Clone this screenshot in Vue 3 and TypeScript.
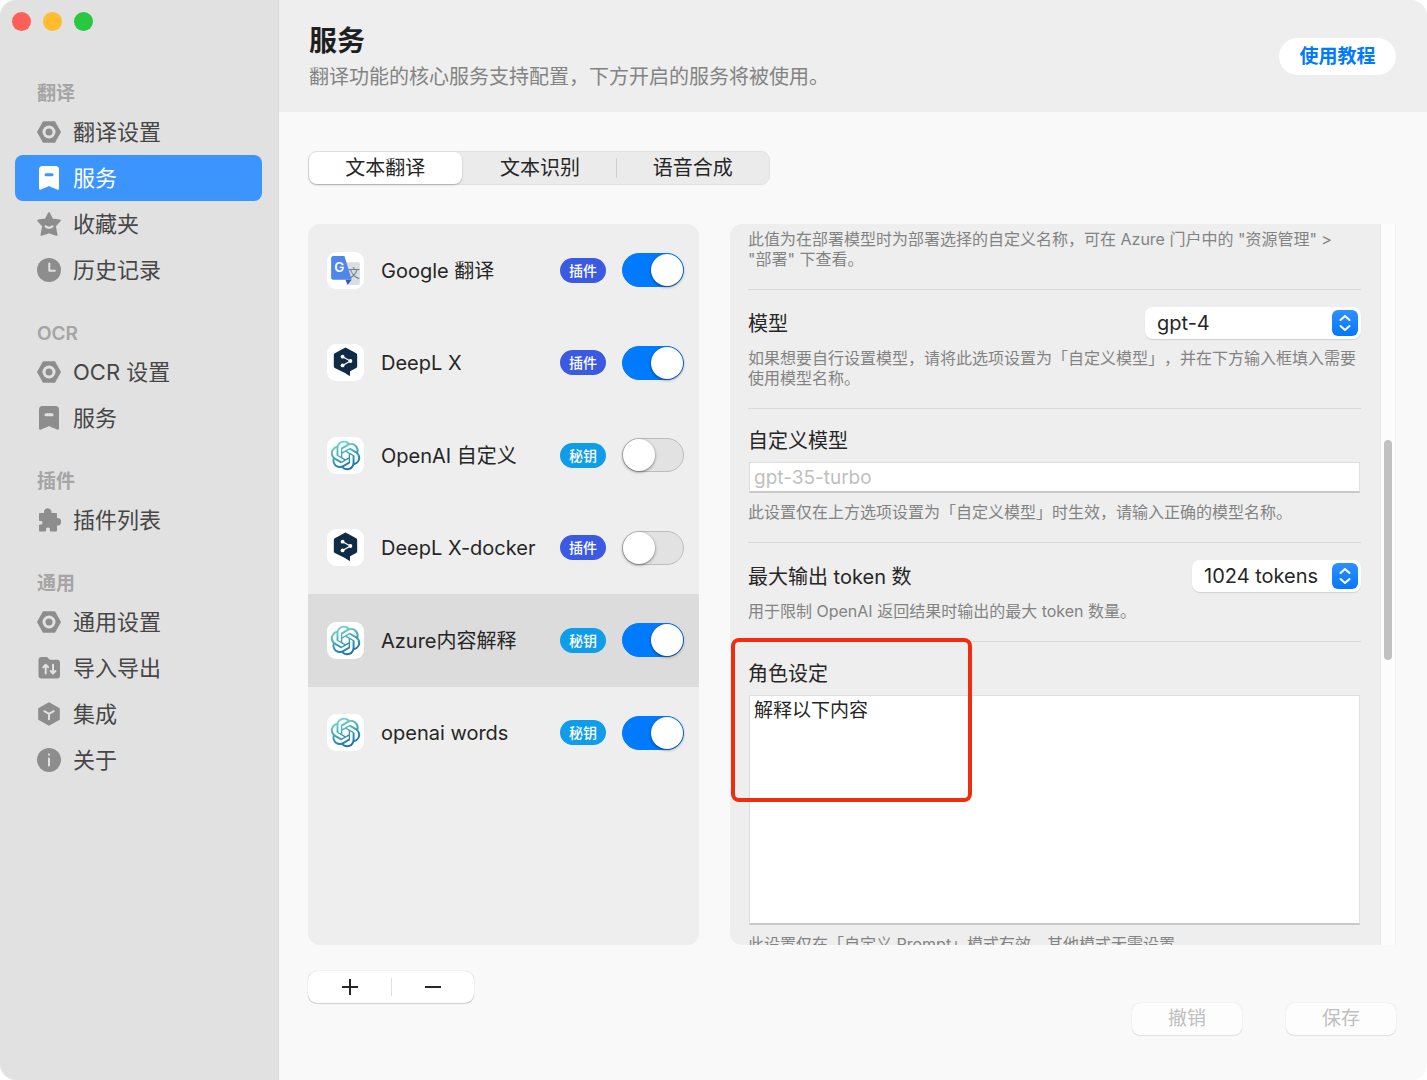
<script setup lang="ts">
import { ref } from 'vue'

type IconName = 'gear' | 'bookmark' | 'star' | 'clock' | 'puzzle' | 'folder' | 'box' | 'info'
type Logo = 'google' | 'deepl' | 'openai'

interface NavItem {
  icon: IconName
  label: string
  active?: boolean
}

interface NavGroup {
  title: string
  items: NavItem[]
}

interface Service {
  name: string
  logo: Logo
  tag: string
  enabled: boolean
}

const groups: NavGroup[] = [
  {
    title: '翻译',
    items: [
      { icon: 'gear', label: '翻译设置' },
      { icon: 'bookmark', label: '服务', active: true },
      { icon: 'star', label: '收藏夹' },
      { icon: 'clock', label: '历史记录' },
    ],
  },
  {
    title: 'OCR',
    items: [
      { icon: 'gear', label: 'OCR 设置' },
      { icon: 'bookmark', label: '服务' },
    ],
  },
  { title: '插件', items: [{ icon: 'puzzle', label: '插件列表' }] },
  {
    title: '通用',
    items: [
      { icon: 'gear', label: '通用设置' },
      { icon: 'folder', label: '导入导出' },
      { icon: 'box', label: '集成' },
      { icon: 'info', label: '关于' },
    ],
  },
]

const tabs = ['文本翻译', '文本识别', '语音合成']
const activeTab = ref(0)

const services = ref<Service[]>([
  { name: 'Google 翻译', logo: 'google', tag: '插件', enabled: true },
  { name: 'DeepL X', logo: 'deepl', tag: '插件', enabled: true },
  { name: 'OpenAI 自定义', logo: 'openai', tag: '秘钥', enabled: false },
  { name: 'DeepL X-docker', logo: 'deepl', tag: '插件', enabled: false },
  { name: 'Azure内容解释', logo: 'openai', tag: '秘钥', enabled: true },
  { name: 'openai words', logo: 'openai', tag: '秘钥', enabled: true },
])
const selected = ref(4)

const model = ref('gpt-4')
const tokens = ref('1024 tokens')
const customModel = ref('')
const role = ref('解释以下内容')
</script>

<template>
  <div class="window">
    <aside class="sidebar">
      <div class="lights">
        <button class="light red" type="button" aria-label="关闭"></button>
        <button class="light yellow" type="button" aria-label="最小化"></button>
        <button class="light green" type="button" aria-label="缩放"></button>
      </div>
      <nav>
        <section v-for="group in groups" :key="group.title" class="group">
          <h2 class="group-title">{{ group.title }}</h2>
          <a
            v-for="item in group.items"
            :key="item.label"
            href="#"
            class="nav-item"
            :class="{ active: item.active }"
          >
            <svg class="nav-icon" viewBox="0 0 24 24" aria-hidden="true">
              <template v-if="item.icon === 'gear'">
                <path class="fill join" d="M1.100 12 6.600 2.200h10.800L22.900 12l-5.500 9.800H6.600z" />
                <circle class="cut-line heavy" cx="12" cy="12" r="5" />
              </template>
              <template v-else-if="item.icon === 'bookmark'">
                <path class="fill" d="M5.500 0h13A3.500 3.500 0 0 1 22 3.500V22.400a1.300 1.300 0 0 1-2 1.100C17 22 14.500 21.500 12 20 9.500 21.500 7 22 4 23.500a1.300 1.300 0 0 1-2-1.100V3.500A3.500 3.500 0 0 1 5.500 0z" />
                <path class="cut-line heavy" d="M9 8.800h6" />
              </template>
              <template v-else-if="item.icon === 'star'">
                <path class="fill join" d="M12 1.200 15.200 7.400 22.800 8.600 17.800 14 19.500 22.800 12 20.200 4.500 22.800 6.200 14 1.200 8.600 8.800 7.400z" />
                <path class="cut-line" d="M8.500 14.400c2 1.500 5 1.500 7 0" />
              </template>
              <template v-else-if="item.icon === 'clock'">
                <circle class="fill" cx="12" cy="12" r="12" />
                <path class="cut-line" d="M12.300 5.500v7.200h5.500" />
              </template>
              <template v-else-if="item.icon === 'puzzle'">
                <path class="fill join" d="M3 6h5.300C7.300 3.400 8.400 1.300 10.700 1.300S14.100 3.400 13.200 6H19v5.300c2.500-.9 4.300.3 4.300 2.400S21.500 17 19 16.100V22.500h-5.200c.5-2.700-.8-4-2.800-4s-3.300 1.300-2.800 4H3v-5c2.300.4 3.400-.8 3.400-2.700S5.300 11.700 3 12.100z" />
              </template>
              <template v-else-if="item.icon === 'folder'">
                <path class="fill" d="M4.500 1h4.800c2.200 0 2.200 2.800 4.500 2.800H20A3 3 0 0 1 23 6.800V19.500a3 3 0 0 1-3 3H4.500a3 3 0 0 1-3-3V4a3 3 0 0 1 3-3z" />
                <path class="cut-line" d="M8.700 17.500V9M6.300 11.200 8.700 8.800l2.400 2.400M16 8.800v8.500M13.600 15l2.400 2.500 2.400-2.500" />
              </template>
              <template v-else-if="item.icon === 'box'">
                <path class="fill join" d="M12 1.300 21.800 6.800V17.200L12 22.700 2.200 17.200V6.800z" />
                <path class="cut-line" d="M7.300 9.200 12 11.900l4.700-2.700M12 12v5.300" />
              </template>
              <template v-else>
                <circle class="fill" cx="12" cy="12" r="12" />
                <path class="cut-line" d="M12 10.500v7M12 6.500v.2" />
              </template>
            </svg>
            <span>{{ item.label }}</span>
          </a>
        </section>
      </nav>
    </aside>

    <main class="main">
      <header class="header">
        <div class="heading">
          <h1 class="title">服务</h1>
          <p class="subtitle">翻译功能的核心服务支持配置，下方开启的服务将被使用。</p>
        </div>
        <button class="tutorial" type="button">使用教程</button>
      </header>

      <div class="body">
        <div class="tabs" role="tablist">
          <button
            v-for="(tab, i) in tabs"
            :key="tab"
            type="button"
            role="tab"
            class="tab"
            :class="{ current: i === activeTab, divided: i > 0 && i - 1 !== activeTab && i !== activeTab }"
            :aria-selected="i === activeTab"
            @click="activeTab = i"
          >
            {{ tab }}
          </button>
        </div>

        <div class="panels">
          <div class="services">
            <ul class="service-list">
              <li
                v-for="(service, i) in services"
                :key="service.name"
                class="service"
                :class="{ selected: i === selected }"
                @click="selected = i"
              >
                <span class="logo">
                  <svg v-if="service.logo === 'google'" viewBox="0 0 36 36" aria-hidden="true">
                    <path fill="#dcdde0" d="M17 10h13a2 2 0 0 1 2 2v18a2 2 0 0 1-2 2H21z" />
                    <text x="20" y="25" font-size="12" fill="#6f7f8c">文</text>
                    <path fill="#3a55c0" d="M18 27h6l-4 5z" />
                    <path fill="#4f86ea" d="M6 4h11l7 23H6a2 2 0 0 1-2-2V6a2 2 0 0 1 2-2z" />
                    <text x="7" y="19" font-size="13" font-weight="600" fill="#fff">G</text>
                  </svg>
                  <svg v-else-if="service.logo === 'deepl'" viewBox="-1 -1 38 38" aria-hidden="true">
                    <path fill="#0f2b46" d="M17 3q1-.6 2 0l10 5.400q1 .6 1 1.800v11.600q0 1.200-1 1.800l-6.300 3.400-.2 5-5-3.200L7 23.600q-1-.6-1-1.800V10.200Q6 9 7 8.400z" />
                    <path fill="none" stroke="#fff" stroke-width="1.200" d="m15 12 8 4.500-8 4.500" />
                    <g fill="#fff">
                      <circle cx="15" cy="12" r="2" />
                      <circle cx="23" cy="16.500" r="2" />
                      <circle cx="15" cy="21" r="2" />
                    </g>
                  </svg>
                  <svg v-else viewBox="-3 -3 30 30" aria-hidden="true">
                    <defs>
                      <linearGradient :id="'knot-' + i" x1="0.300" y1="0" x2="0.700" y2="1">
                        <stop offset="0" stop-color="#7ddcd3" />
                        <stop offset="0.500" stop-color="#38a3b8" />
                        <stop offset="1" stop-color="#1767a8" />
                      </linearGradient>
                    </defs>
                    <path
                      :fill="`url(#knot-${i})`"
                      d="M22.2819 9.8211a5.9847 5.9847 0 0 0-.5157-4.9108 6.0462 6.0462 0 0 0-6.5098-2.9A6.0651 6.0651 0 0 0 4.9807 4.1818a5.9847 5.9847 0 0 0-3.9977 2.9 6.0462 6.0462 0 0 0 .7427 7.0966 5.98 5.98 0 0 0 .511 4.9107 6.051 6.051 0 0 0 6.5146 2.9001A5.9847 5.9847 0 0 0 13.2599 24a6.0557 6.0557 0 0 0 5.7718-4.2058 5.9894 5.9894 0 0 0 3.9977-2.9001 6.0557 6.0557 0 0 0-.7475-7.0729zm-9.022 12.6081a4.4755 4.4755 0 0 1-2.8764-1.0408l.1419-.0804 4.7783-2.7582a.7948.7948 0 0 0 .3927-.6813v-6.7369l2.02 1.1686a.071.071 0 0 1 .038.052v5.5826a4.504 4.504 0 0 1-4.4945 4.4944zm-9.6607-4.1254a4.4708 4.4708 0 0 1-.5346-3.0137l.142.0852 4.783 2.7582a.7712.7712 0 0 0 .7806 0l5.8428-3.3685v2.3324a.0804.0804 0 0 1-.0332.0615L9.74 19.9502a4.4992 4.4992 0 0 1-6.1408-1.6464zM2.3408 7.8956a4.485 4.485 0 0 1 2.3655-1.9728V11.6a.7664.7664 0 0 0 .3879.6765l5.8144 3.3543-2.0201 1.1685a.0757.0757 0 0 1-.071 0l-4.8303-2.7865A4.504 4.504 0 0 1 2.3408 7.872zm16.5963 3.8558L13.1038 8.364 15.1192 7.2a.0757.0757 0 0 1 .071 0l4.8303 2.7913a4.4944 4.4944 0 0 1-.6765 8.1042v-5.6772a.79.79 0 0 0-.407-.667zm2.0107-3.0231l-.142-.0852-4.7735-2.7818a.7759.7759 0 0 0-.7854 0L9.409 9.2297V6.8974a.0662.0662 0 0 1 .0284-.0615l4.8303-2.7866a4.4992 4.4992 0 0 1 6.6802 4.66zM8.3065 12.863l-2.02-1.1638a.0804.0804 0 0 1-.038-.0567V6.0742a4.4992 4.4992 0 0 1 7.3757-3.4537l-.142.0805L8.704 5.459a.7948.7948 0 0 0-.3927.6813zm1.0976-2.3654l2.602-1.4998 2.6069 1.4998v2.9994l-2.5974 1.4997-2.6067-1.4997Z"
                    />
                  </svg>
                </span>
                <label class="service-name" :for="'service-' + i">{{ service.name }}</label>
                <span class="badge" :class="{ key: service.tag === '秘钥' }">{{ service.tag }}</span>
                <input :id="'service-' + i" v-model="service.enabled" class="switch" type="checkbox" role="switch" />
              </li>
            </ul>
          </div>

          <div class="settings">
            <form class="form" @submit.prevent>
              <section class="field first">
                <p class="hint">此值为在部署模型时为部署选择的自定义名称，可在 Azure 门户中的 "资源管理" &gt; <span class="keep">"部署"</span> 下查看。</p>
              </section>

              <section class="field">
                <div class="row">
                  <label class="name" for="model">模型</label>
                  <div class="select wide">
                    <select id="model" v-model="model">
                      <option>gpt-4</option>
                    </select>
                    <svg viewBox="0 0 26 26" aria-hidden="true"><path d="m8.500 10 4.500-4 4.500 4M8.500 16l4.500 4 4.500-4" /></svg>
                  </div>
                </div>
                <p class="hint">如果想要自行设置模型，请将此选项设置为「自定义模型」，并在下方输入框填入需要使用模型名称。</p>
              </section>

              <section class="field">
                <label class="stacked" for="custom-model">自定义模型</label>
                <div class="box">
                  <input id="custom-model" v-model="customModel" class="text" type="text" placeholder="gpt-35-turbo" />
                </div>
                <p class="hint">此设置仅在上方选项设置为「自定义模型」时生效，请输入正确的模型名称。</p>
              </section>

              <section class="field">
                <div class="row">
                  <label class="name" for="tokens">最大输出 token 数</label>
                  <div class="select">
                    <select id="tokens" v-model="tokens">
                      <option>1024 tokens</option>
                    </select>
                    <svg viewBox="0 0 26 26" aria-hidden="true"><path d="m8.500 10 4.500-4 4.500 4M8.500 16l4.500 4 4.500-4" /></svg>
                  </div>
                </div>
                <p class="hint">用于限制 OpenAI 返回结果时输出的最大 token 数量。</p>
              </section>

              <section class="field role">
                <label class="stacked" for="role">角色设定</label>
                <div class="box">
                  <textarea id="role" v-model="role" class="text area"></textarea>
                </div>
                <p class="hint">此设置仅在「自定义 Prompt」模式有效，其他模式无需设置。</p>
                <span class="highlight"></span>
              </section>
            </form>
            <div class="track"><div class="thumb"></div></div>
          </div>
        </div>

        <footer class="footer">
          <div class="stepper">
            <button type="button" aria-label="添加">
              <svg viewBox="0 0 16 16" aria-hidden="true"><path d="M8 0v16M0 8h16" /></svg>
            </button>
            <button type="button" aria-label="删除">
              <svg viewBox="0 0 16 16" aria-hidden="true"><path d="M0 8h16" /></svg>
            </button>
          </div>
          <div class="actions">
            <button type="button" disabled>撤销</button>
            <button type="button" disabled>保存</button>
          </div>
        </footer>
      </div>
    </main>
  </div>
</template>

<style>
body {
  margin: 0;
  background: #fff;
}
</style>

<style scoped>
* {
  box-sizing: border-box;
}

.window {
  display: flex;
  height: 100vh;
  overflow: hidden;
  border-radius: 16px;
  background: #f9f9f9;
  color: #262626;
  font-family: Inter, 'Noto Sans CJK SC', sans-serif;
  font-size: 20px;
  line-height: 30px;
  text-spacing-trim: space-all;
}

h1,
h2,
p,
ul {
  margin: 0;
  padding: 0;
}

button,
input,
select,
textarea {
  margin: 0;
  padding: 0;
  border: 0;
  color: inherit;
  font: inherit;
}

.sidebar {
  flex: none;
  width: 279px;
  padding: 12px 16px 0 15px;
  border-right: 1px solid #dadada;
  background: #e1e1e1;
}

.lights {
  display: flex;
  gap: 12px;
  margin: 0 0 46px -3px;
}

.light {
  width: 19px;
  height: 19px;
  border-radius: 50%;
}

.red {
  background: #fe5f57;
}

.yellow {
  background: #febc2e;
}

.green {
  background: #28c840;
}

.group {
  margin-bottom: 24px;
}

.group-title {
  padding: 2px 0 0 22px;
  color: #a5a5a5;
  font-size: 19px;
  font-weight: 600;
  line-height: 30px;
}

.nav-item {
  --cut: #e1e1e1;
  display: flex;
  align-items: center;
  gap: 12px;
  height: 46px;
  padding-left: 22px;
  border-radius: 8px;
  color: #464646;
  font-size: 22px;
  text-decoration: none;
}

.nav-icon {
  width: 24px;
  height: 24px;
  color: #8d8d8d;
}

.nav-item.active {
  --cut: #3c94fd;
  background: #3c94fd;
  color: #fff;
}

.active .nav-icon {
  color: #fff;
}

.fill {
  fill: currentColor;
}

.join {
  stroke: currentColor;
  stroke-width: 2;
  stroke-linejoin: round;
}

.cut-line {
  fill: none;
  stroke: var(--cut);
  stroke-width: 2;
  stroke-linecap: round;
  stroke-linejoin: round;
}

.cut-line.heavy {
  stroke-width: 3;
}

.main {
  display: flex;
  flex: 1;
  flex-direction: column;
  min-width: 0;
}

.header {
  display: flex;
  align-items: center;
  justify-content: space-between;
  height: 112px;
  padding: 0 31px 0 30px;
  background: #eee;
}

.title {
  color: #1f1f1f;
  font-size: 28px;
  font-weight: 600;
  line-height: 42px;
}

.subtitle {
  color: #838383;
}

.tutorial {
  width: 117px;
  height: 37px;
  padding-top: 2px;
  border-radius: 19px;
  background: #fff;
  color: #007aff;
  font-size: 19px;
  font-weight: 600;
}

.body {
  display: flex;
  flex: 1;
  flex-direction: column;
  min-height: 0;
  padding: 39px 31px 45px 29px;
}

.tabs {
  display: flex;
  align-self: flex-start;
  width: 462px;
  height: 34px;
  border: 1px solid #e0e0e0;
  border-radius: 9px;
  background: #ebebeb;
}

.tab {
  position: relative;
  flex: 1;
  border-radius: 8px;
  background: transparent;
}

.tab.current {
  margin-right: 2px;
  background: #fff;
  box-shadow: 0 1px 2px rgb(0 0 0 / 25%);
}

.tab.divided::before {
  position: absolute;
  top: 6px;
  bottom: 6px;
  left: 0;
  width: 1px;
  background: #cfcfcf;
  content: '';
}

.panels {
  display: flex;
  flex: 1;
  gap: 31px;
  min-height: 0;
  margin-top: 39px;
}

.services {
  flex: none;
  width: 391px;
  overflow: hidden;
  border-radius: 12px;
  background: #eee;
}

.service-list {
  display: flex;
  flex-direction: column;
  height: 555px;
  list-style: none;
}

.service {
  display: flex;
  flex: 1;
  align-items: center;
  padding: 0 15px 0 19px;
}

.service.selected {
  background: #dcdcdc;
}

.logo {
  width: 37px;
  height: 37px;
  border-radius: 9px;
  background: #fff;
}

.logo svg {
  display: block;
}

.service-name {
  flex: 1;
  padding-top: 1px;
  margin-left: 17px;
}

.badge {
  width: 46px;
  height: 25px;
  margin-right: 16px;
  border-radius: 13px;
  background: #3c59e2;
  color: #fff;
  font-size: 14px;
  font-weight: 500;
  line-height: 25px;
  text-align: center;
}

.badge.key {
  background: #0f9dea;
}

.switch {
  width: 62px;
  height: 34px;
  border: 1px solid #bdbdbd;
  border-radius: 17px;
  background: #e2e2e2;
  appearance: none;
}

.switch::before {
  display: block;
  width: 32px;
  height: 32px;
  border-radius: 50%;
  background: #fff;
  box-shadow: 0 1px 3px rgb(0 0 0 / 50%);
  content: '';
}

.switch:checked {
  border-color: #007aff;
  background: #007aff;
}

.switch:checked::before {
  margin-left: 28px;
}

.settings {
  display: flex;
  flex: 1;
  min-width: 0;
}

.form {
  flex: 1;
  min-width: 0;
  overflow: hidden;
  padding: 0 19px 0 18px;
  border-right: 1px solid #e6e6e6;
  border-radius: 12px 0 0 12px;
  background: #eee;
}

.field {
  padding: 17px 0 20px;
  border-bottom: 1px solid #d9d9d9;
}

.field.first {
  padding-top: 5px;
}

.field.role {
  position: relative;
}

.row {
  display: flex;
  align-items: center;
  justify-content: space-between;
  height: 32px;
}

.name {
  padding-top: 2px;
}

.hint {
  margin-top: 9px;
  color: #838383;
  font-size: 16px;
  line-height: 20px;
}

.first .hint {
  margin-top: 0;
}

.keep {
  white-space: nowrap;
}

.stacked {
  display: block;
  margin-bottom: 6px;
}

.box {
  padding: 0 1px;
}

.select {
  position: relative;
  width: 169px;
}

.select.wide {
  width: 216px;
}

.select select {
  display: block;
  width: 100%;
  height: 32px;
  padding: 0 32px 0 12px;
  border-radius: 8px;
  background: #fff;
  box-shadow: 0 1px 1px rgb(0 0 0 / 12%);
  appearance: none;
}

.select svg {
  position: absolute;
  top: 3px;
  right: 3px;
  width: 26px;
  height: 26px;
  border-radius: 6px;
  background: linear-gradient(#2f90ff, #0577fc);
  pointer-events: none;
}

.select path {
  fill: none;
  stroke: #fff;
  stroke-width: 2;
  stroke-linecap: round;
  stroke-linejoin: round;
}

.text {
  display: block;
  width: 100%;
  height: 31px;
  padding: 0 4px;
  border: 1px solid #dedede;
  border-bottom: 2px solid #c9c9c9;
  background: #fff;
  font-size: 19px;
}

.text::placeholder {
  color: #bfbfbf;
}

.area {
  height: 230px;
  resize: none;
}

.highlight {
  position: absolute;
  top: -4px;
  left: -17px;
  width: 241px;
  height: 164px;
  border: 4px solid #f02d10;
  border-radius: 8px;
  pointer-events: none;
}

.track {
  width: 15px;
  padding: 216px 3px 0;
  border-right: 1px solid #f1f1f1;
  background: #fcfcfc;
}

.thumb {
  height: 220px;
  border-radius: 5px;
  background: #c1c1c1;
}

.footer {
  display: flex;
  justify-content: space-between;
  height: 64px;
  margin-top: 26px;
}

.stepper {
  display: flex;
  align-self: flex-start;
  border-radius: 9px;
  background: #fff;
  box-shadow: 0 0 1px rgb(0 0 0 / 30%), 0 1px 1px rgb(0 0 0 / 15%);
}

.stepper button {
  position: relative;
  display: grid;
  place-items: center;
  width: 83px;
  height: 32px;
  background: none;
}

.stepper button + button::before {
  position: absolute;
  top: 7px;
  bottom: 7px;
  left: 0;
  width: 1px;
  background: #dedede;
  content: '';
}

.stepper svg {
  width: 16px;
  height: 16px;
  stroke: #262626;
  stroke-width: 2;
}

.actions {
  display: flex;
  align-self: flex-end;
  gap: 44px;
}

.actions button {
  width: 110px;
  height: 32px;
  border-radius: 8px;
  background: #fdfdfd;
  box-shadow: 0 0 1px rgb(0 0 0 / 20%), 0 1px 1px rgb(0 0 0 / 8%);
  color: #bfbfbf;
  font-size: 19px;
}
</style>
